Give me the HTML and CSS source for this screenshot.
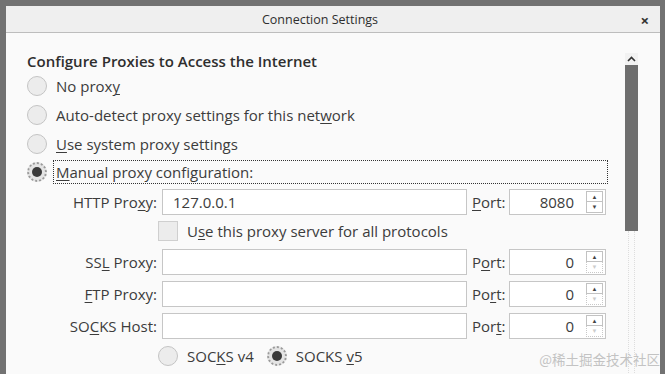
FILE: index.html
```html
<!DOCTYPE html>
<html>
<head>
<meta charset="utf-8">
<link rel="stylesheet" href="styles.css">
</head>
<body>
<div class="window">
  <div class="titlebar">
    <span class="title">Connection Settings</span>
    <span class="close">×</span>
  </div>
  <div class="content">
    <div class="main">
      <div class="heading">Configure Proxies to Access the Internet</div>
      <div class="radio-row"><span class="radio"></span><span class="label">No prox<u>y</u></span></div>
      <div class="radio-row"><span class="radio"></span><span class="label">Auto-detect proxy settings for this net<u>w</u>ork</span></div>
      <div class="radio-row"><span class="radio"></span><span class="label"><u>U</u>se system proxy settings</span></div>
      <div class="radio-row"><span class="radio checked"></span><span class="label focus"><u>M</u>anual proxy configuration:</span></div>
      <div class="form">
        <span class="flabel">HTTP Pro<u>x</u>y:</span>
        <span class="input">127.0.0.1</span>
        <span class="plabel"><u>P</u>ort:</span>
        <span class="input port">8080<span class="spin"><span class="up on">▲</span><span class="down on">▼</span></span></span>

        <div class="check-row"><span class="checkbox"></span><span>U<u>s</u>e this proxy server for all protocols</span></div>

        <span class="flabel">SS<u>L</u> Proxy:</span>
        <span class="input"></span>
        <span class="plabel">P<u>o</u>rt:</span>
        <span class="input port">0<span class="spin"><span class="up on">▲</span><span class="down off">▼</span></span></span>

        <span class="flabel"><u>F</u>TP Proxy:</span>
        <span class="input"></span>
        <span class="plabel">Po<u>r</u>t:</span>
        <span class="input port">0<span class="spin"><span class="up on">▲</span><span class="down off">▼</span></span></span>

        <span class="flabel">SO<u>C</u>KS Host:</span>
        <span class="input"></span>
        <span class="plabel">Por<u>t</u>:</span>
        <span class="input port">0<span class="spin"><span class="up on">▲</span><span class="down off">▼</span></span></span>

        <div class="socks-row">
          <span class="radio"></span><span class="slabel">SOC<u>K</u>S v4</span>
          <span class="radio checked"></span><span class="slabel">SOCKS <u>v</u>5</span>
        </div>
      </div>
    </div>
    <div class="scrollbar">
      <div class="arrow"><svg width="9" height="6" viewBox="0 0 9 6"><path d="M1 5 L4.5 1.5 L8 5" fill="none" stroke="#333" stroke-width="1.6"/></svg></div>
      <div class="thumb"></div>
      <div class="track"></div>
    </div>
  </div>
  <div class="watermark">@稀土掘金技术社区</div>
</div>
</body>
</html>
```
FILE: styles.css
```css
* { box-sizing: border-box; }
html, body { margin: 0; padding: 0; }
body {
  width: 665px; height: 374px; overflow: hidden;
  background: #727272;
  font-family: "Open Sans", "Noto Sans", sans-serif;
  color: #3c3c3c;
}
.window {
  margin: 6px 0 0 6px;
  width: 654px; height: 368px;
  background: #fafafa;
  position: relative;
  overflow: hidden;
}
.titlebar {
  height: 27px;
  background: #efefef;
  border-bottom: 1px solid #bdbdbd;
  display: flex; align-items: center; justify-content: center;
  padding-right: 26px;
  position: relative;
}
.title { font-size: 12.5px; color: #2e2e2e; }
.close { position: absolute; right: 11px; top: 4px; font-size: 15px; font-weight: 700; color: #333; }
.content { display: flex; }
.main { flex: 1; padding: 17px 0 0 21px; }
.heading { font-size: 15px; font-weight: 600; color: #2e2e2e; height: 22px; line-height: 22px; }
.radio-row { display: flex; align-items: center; height: 28.7px; }
.radio {
  width: 20px; height: 20px; border-radius: 50%;
  border: 1px solid #c4c4c4;
  background: #ececec;
  flex: none; position: relative;
}
.radio.checked { border: 2px dotted #9a9a9a; background: #e4e4e4; }
.radio.checked::after {
  content: ""; position: absolute; left: 3px; top: 3px; width: 10px; height: 10px;
  border-radius: 50%; background: #3a3a3a;
}
.label { margin-left: 7px; font-size: 15px; padding: 1px 2px; }
.label.focus { border: 1px dotted #333; width: 555px; margin-left: 6px; }
u { text-decoration-thickness: 1px; text-underline-offset: 2px; }
.form {
  display: grid;
  grid-template-columns: 130px 305px 32px 97px;
  column-gap: 5px;
  row-gap: 6px;
  margin-top: 2px;
  font-size: 15px;
  align-items: center;
}
.flabel { text-align: right; }
.plabel { white-space: nowrap; }
.input {
  height: 26px; border: 1px solid #c6c6c6; background: #fff;
  display: flex; align-items: center; padding-left: 10px;
}
.input.port { justify-content: flex-end; padding-left: 0; padding-right: 2px; position: relative; }
.spin { display: flex; flex-direction: column; margin-left: 12px; width: 17px; height: 22px; }
.spin span { flex: 1; display: flex; align-items: center; justify-content: center; font-size: 6px; color: #444; }
.spin .on { border: 1px solid #c2c2c2; }
.spin .up.on + .down.on { border-top: none; }
.spin .off { border: 1px dotted #c8c8c8; border-top: none; color: #ccc; }
.check-row { grid-column: 2 / 5; display: flex; align-items: center; gap: 9px; margin-left: -4px; height: 20px; margin-top: 0; margin-bottom: 2px; }
.checkbox { width: 20px; height: 20px; border: 1px solid #cfcfcf; background: #ececec; flex: none; }
.socks-row { grid-column: 2 / 5; display: flex; align-items: center; margin-left: -4px; height: 22px; margin-top: 0; }
.slabel { margin-left: 9px; margin-right: 13px; }
.scrollbar { width: 13px; margin-right: 22px; margin-top: 20px; display: flex; flex-direction: column; }
.arrow { height: 12px; display: flex; align-items: center; justify-content: center; background: #f2f2f2; }
.thumb { height: 166px; background: #6e6e6e; }
.track { height: 170px; border-left: 1px dotted #ddd; border-right: 1px dotted #ddd; margin: 0 3px; }
.watermark {
  position: absolute; right: 0; bottom: 5px;
  font-family: "Noto Sans CJK SC", sans-serif; font-size: 13.5px; color: #c3c3c3;
}
```
